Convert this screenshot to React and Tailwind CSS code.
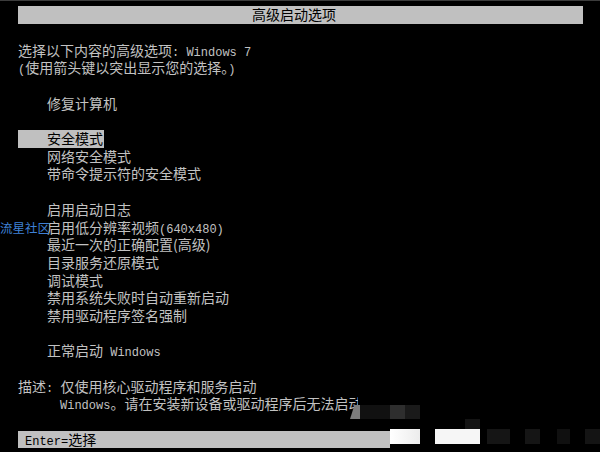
const L = ({ children }) => (
  <span className="font-['Liberation_Mono','DejaVu_Sans_Mono',monospace] text-[12px]">{children}</span>
);

const Row = ({ indent = 0, children }) => (
  <div className="h-[17.7px] leading-[17.7px] whitespace-pre" style={{ paddingLeft: indent }}>
    {children}
  </div>
);

const Blank = () => <div className="h-[17.7px]" />;

const items = [
  '网络安全模式',
  '带命令提示符的安全模式',
  '',
  '启用启动日志',
  <>启用低分辨率视频<L>(640x480)</L></>,
  '最近一次的正确配置(高级)',
  '目录服务还原模式',
  '调试模式',
  '禁用系统失败时自动重新启动',
  '禁用驱动程序签名强制',
];

export default function App() {
  return (
    <div className="relative w-[600px] h-[452px] overflow-hidden bg-black text-[14px] text-[#c2c2c2] font-['Noto_Sans_CJK_SC','Noto_Sans',sans-serif]">
      <div className="h-px bg-[#3c3c3c]" />
      <div className="pt-[5.25px] pl-[18px] pr-[17px]">
        {/* title bar */}
        <div className="h-[17.7px] leading-[17.7px] bg-[#c0c0c0] text-black pl-[234px]">高级启动选项</div>
        <Blank />
        <Row>选择以下内容的高级选项<L>: Windows 7</L></Row>
        <Row><L>(</L>使用箭头键以突出显示您的选择。<L>)</L></Row>
        <Blank />
        <Row indent={29}>修复计算机</Row>
        <Blank />
        <div className="h-[17.7px] leading-[17.7px]">
          <span className="inline-block h-full bg-[#c0c0c0] text-black pl-[29px] pr-[1px]">安全模式</span>
        </div>
        {items.map((t, i) =>
          t === '' ? <Blank key={i} /> : <Row key={i} indent={29}>{t}</Row>
        )}
        <Blank />
        <Row indent={29}>正常启动<L> Windows</L></Row>
        <Blank />
        <Row>描述<L>: </L>仅使用核心驱动程序和服务启动</Row>
        <Row indent={42}><L>Windows</L>。请在安装新设备或驱动程序后无法启动</Row>
        <Blank />
        <div className="h-[17.7px] leading-[17.7px] w-[372px] bg-[#c0c0c0] text-black pl-[7px]">
          <L>Enter=</L>选择
        </div>
      </div>

      {/* watermark */}
      <div className="absolute left-0 top-[219px] text-[12.5px] leading-[17px] text-[#3f80d6]">流星社区</div>

      {/* compression blocks over the bottom right */}
      <div className="absolute left-[350px] top-[394px] w-[250px] h-[58px] flex flex-col">
        <div className="flex h-[11px]">
          <div className="w-[8px]" />
          <div className="w-[62px] bg-black" />
        </div>
        <div className="flex h-[14px]">
          <div className="w-[10px] bg-[#7c7c7c] [clip-path:polygon(45%_0,100%_0,100%_100%,0_100%)]" />
          <div className="w-[30px] bg-[#111]" />
          <div className="w-[15px] bg-[#2e2e2e]" />
          <div className="w-[15px] bg-[#1a1a1a]" />
        </div>
        <div className="flex h-[10px]">
          <div className="w-[2px]" />
          <div className="w-[38px] self-end h-[4px] bg-black" />
          <div className="w-[75px]" />
          <div className="w-[15px] bg-[#141414]" />
        </div>
        <div className="flex h-[15px]">
          <div className="w-[40px]" />
          <div className="w-[30px] bg-gradient-to-r from-white to-[#ececec]" />
          <div className="w-[15px]" />
          <div className="w-[45px] bg-[#f6f6f6]" />
          <div className="w-[7px]" />
          <div className="w-[23px] bg-[#151515]" />
          <div className="w-[15px]" />
          <div className="w-[15px] bg-[#151515]" />
          <div className="w-[17px]" />
          <div className="w-[13px] bg-[#101010]" />
          <div className="w-[15px]" />
          <div className="w-[15px] bg-[#141414]" />
        </div>
      </div>
    </div>
  );
}
